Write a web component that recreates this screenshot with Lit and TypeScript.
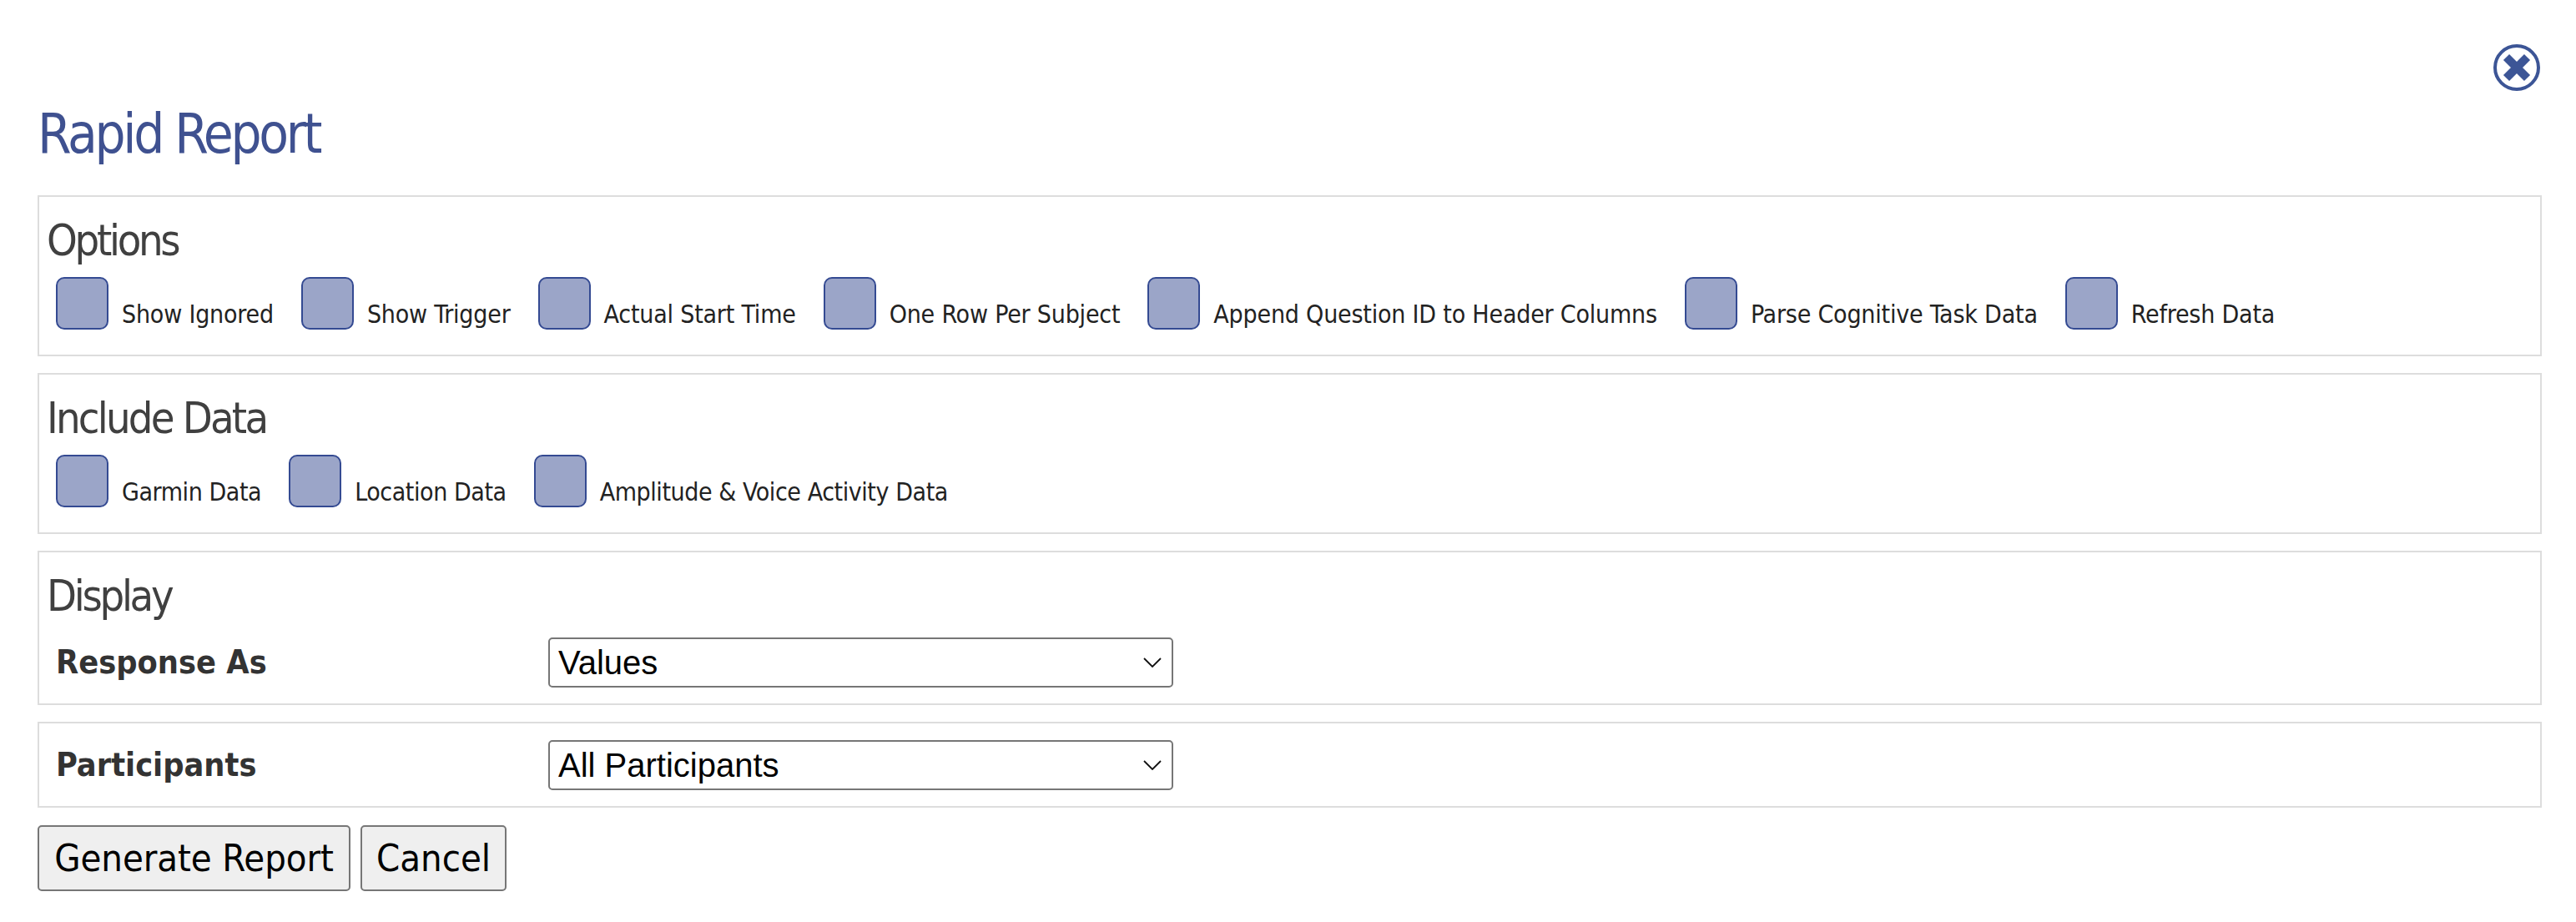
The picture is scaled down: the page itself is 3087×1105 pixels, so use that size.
import { LitElement, html, css } from "lit";
import { customElement } from "lit/decorators.js";

const CHEVRON =
  "data:image/svg+xml," +
  encodeURIComponent(
    '<svg xmlns="http://www.w3.org/2000/svg" width="22" height="12" viewBox="0 0 22 12"><path d="M1 1 L11 11 L21 1" fill="none" stroke="#111" stroke-width="1.8"/></svg>'
  );

@customElement("app-root")
export class AppRoot extends LitElement {
  static styles = css`
    :host { display: block; box-sizing: border-box; width: 3087px; height: 1105px; padding: 53px 41px 0 45px; background: #fff; font-family: "DejaVu Sans", sans-serif; color: #333; }
    * { box-sizing: border-box; }
    .close-row { display: flex; justify-content: flex-end; height: 55px; margin-right: 2px; }
    .close { width: 56px; height: 56px; display: block; }
    h1 { margin: 15px 0 0; height: 111px; font: 400 65px/76px "DejaVu Sans", sans-serif; font-stretch: condensed; letter-spacing: -3.3px; color: #3f5190; }
    .panel { border: 2px solid #ddd; padding: 0 9px; margin-bottom: 20px; }
    .panel.opt { height: 193px; }
    .panel.dis { height: 185px; }
    .panel.par { height: 103px; margin-bottom: 21px; display: flex; align-items: center; }
    h2 { margin: 0; padding-top: 22px; height: 96px; font: 400 52px/60px "DejaVu Sans", sans-serif; font-stretch: condensed; letter-spacing: -3.3px; color: #404040; }
    h2.inc { letter-spacing: -2.8px; }
    .dis h2 { height: 102px; }
    .checks { display: flex; padding-left: 11px; letter-spacing: -0.2px; }
    .checks.tight { letter-spacing: -0.43px; }
    .check { display: flex; align-items: flex-end; margin-right: 33px; }
    input { appearance: none; margin: 0; width: 63px; height: 63px; border: 2px solid #344a92; border-radius: 10px; background: #9ba5c8; }
    .check span { margin-left: 16px; font: 400 30px/36px "DejaVu Sans", sans-serif; font-stretch: condensed; letter-spacing: inherit; color: #222; padding-bottom: 0; white-space: nowrap; }
    .row { display: flex; align-items: center; padding-left: 11px; }
    .row label { width: 590px; font: 700 39.3px/46px "DejaVu Sans", sans-serif; font-stretch: condensed; color: #333; }
    select { appearance: none; width: 749px; height: 60px; font: 400 40px "Liberation Sans", sans-serif; color: #000; background: #fff no-repeat right 12px center; border: 2px solid #767676; border-radius: 5px; padding: 0 10px; }
    .actions { display: flex; gap: 12px; }
    button { height: 79px; padding: 0; font: 400 45px "DejaVu Sans", sans-serif; font-stretch: condensed; color: #000; background: #efefef; border: 2px solid #767676; border-radius: 5px; }
    .gen { width: 375px; letter-spacing: -0.1px; }
    .can { width: 175px; }
  `;

  private checks(items: string[], tight = false) {
    return html`<div class="checks ${tight ? "tight" : ""}">${items.map(
      (t) => html`<label class="check"><input type="checkbox" /><span>${t}</span></label>`
    )}</div>`;
  }

  render() {
    const chevron = `background-image:url("${CHEVRON}")`;
    return html`
      <div class="close-row">
        <svg class="close" viewBox="0 0 56 56" aria-label="Close">
          <circle cx="28" cy="28" r="26" fill="#fff" stroke="#3c5596" stroke-width="4" />
          <path d="M15.5 15.5 L40.5 40.5 M40.5 15.5 L15.5 40.5" stroke="#3c5596" stroke-width="10" fill="none" />
        </svg>
      </div>
      <h1>Rapid Report</h1>
      <section class="panel opt">
        <h2>Options</h2>
        ${this.checks(["Show Ignored", "Show Trigger", "Actual Start Time", "One Row Per Subject", "Append Question ID to Header Columns", "Parse Cognitive Task Data", "Refresh Data"])}
      </section>
      <section class="panel opt">
        <h2 class="inc">Include Data</h2>
        ${this.checks(["Garmin Data", "Location Data", "Amplitude & Voice Activity Data"], true)}
      </section>
      <section class="panel dis">
        <h2>Display</h2>
        <div class="row"><label>Response As</label><select style=${chevron}><option>Values</option></select></div>
      </section>
      <section class="panel par">
        <div class="row"><label>Participants</label><select style=${chevron}><option>All Participants</option></select></div>
      </section>
      <div class="actions"><button class="gen">Generate Report</button><button class="can">Cancel</button></div>
    `;
  }
}
